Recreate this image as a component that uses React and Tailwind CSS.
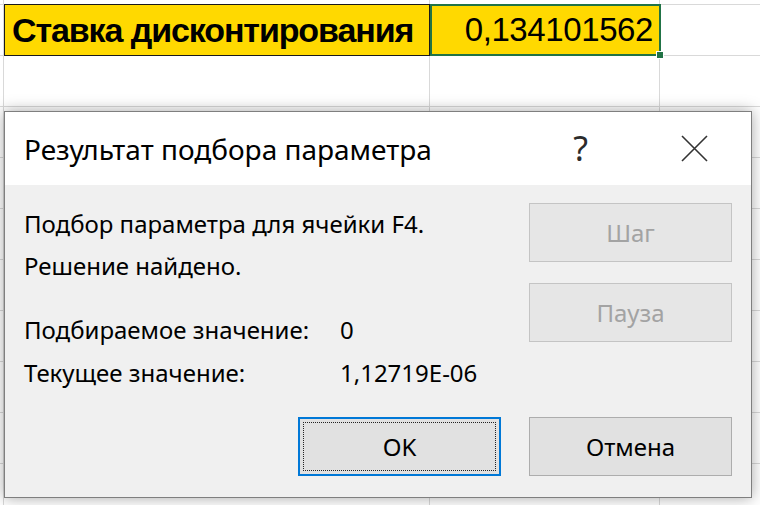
import React from 'react';

const rows = Array.from({ length: 9 });

const Cell = ({ className = '', children }) => (
	<div className={`h-full border-r border-[#d9d9d9] ${className}`}>{children}</div>
);

const SheetRow = ({ h = 'h-[51px]' }) => (
	<div className={`flex ${h} border-b border-[#d9d9d9]`}>
		<Cell className="w-[4px]" />
		<Cell className="w-[426px]" />
		<Cell className="w-[230px]" />
		<div className="flex-1" />
	</div>
);

const DialogButton = ({ children, disabled, focused }) => {
	if (focused) {
		return (
			<button className="h-[59px] w-[203px] border-2 border-[#0078d7] bg-[#e1e1e1] p-[3px]">
				<div className="flex h-full w-full items-center justify-center border border-dotted border-[#222] text-[24px] text-black">
					{children}
				</div>
			</button>
		);
	}
	return (
		<button
			className={`flex h-[59px] w-[203px] items-center justify-center border text-[24px] ${
				disabled
					? 'border-[#c4c4c4] bg-[#e6e6e6] text-[#a3a3a3]'
					: 'border-[#adadad] bg-[#e1e1e1] text-black'
			}`}
		>
			{children}
		</button>
	);
};

const App = () => {
	return (
		<div className="relative h-[505px] w-[760px] overflow-hidden bg-white font-['Liberation_Sans',Arial,sans-serif]">
			{/* sheet */}
			<div className="flex flex-col">
				<SheetRow h="h-[5px]" />
				<div className="flex h-[51px] border-b border-[#d9d9d9]">
					<Cell className="w-[4px]" />
					<div className="flex h-[52px] -mt-px w-[426px] items-center border border-[#1a1a1a] bg-[#ffd900] pl-[7px] text-[34px] font-bold tracking-[-1.1px] text-black">
						Ставка дисконтирования
					</div>
					<div className="relative -mt-px flex h-[52px] w-[231px] items-center justify-end border-2 border-[#217346] bg-[#ffd900] pr-[6px] text-[33px] tracking-[-0.4px] text-black">
						0,134101562
						<span className="absolute -bottom-[5px] -right-[5px] h-[8px] w-[8px] border border-white bg-[#217346]" />
					</div>
					<div className="flex-1" />
				</div>
				{rows.map((_, i) => (
					<SheetRow key={i} />
				))}
			</div>

			{/* dialog */}
			<div className="absolute left-[4px] top-[111px] flex h-[387px] w-[748px] flex-col border border-[#7f7f7f] bg-[#f0f0f0] font-['Noto_Sans','Open_Sans',sans-serif] text-black shadow-[0_0_14px_rgba(0,0,0,0.35)]">
				<div className="flex h-[73px] items-center bg-white pl-[19px]">
					<span className="flex-1 text-[28px]">Результат подбора параметра</span>
					<span className="mr-[93px] text-[34px] text-[#2b2b2b]">?</span>
					<svg className="mr-[43px]" width="27" height="27" viewBox="0 0 27 27">
						<path d="M1 1 L26 26 M26 1 L1 26" stroke="#333" strokeWidth="1.6" fill="none" />
					</svg>
				</div>
				<div className="flex flex-1 flex-col px-[19px] pt-[18px] text-[24px]">
					<div className="flex">
						<div className="flex-1">
							<div className="leading-[42px]">Подбор параметра для ячейки F4.</div>
							<div className="leading-[42px]">Решение найдено.</div>
							<div className="mt-[21px] grid grid-cols-[316px_1fr] leading-[43px]">
								<span>Подбираемое значение:</span>
								<span>0</span>
								<span>Текущее значение:</span>
								<span>1,12719E-06</span>
							</div>
						</div>
						<div className="flex flex-col gap-[21px]">
							<DialogButton disabled>Шаг</DialogButton>
							<DialogButton disabled>Пауза</DialogButton>
						</div>
					</div>
					<div className="mt-[23px] flex justify-end gap-[28px]">
						<DialogButton focused>OK</DialogButton>
						<DialogButton>Отмена</DialogButton>
					</div>
				</div>
			</div>
		</div>
	);
};

export default App;
